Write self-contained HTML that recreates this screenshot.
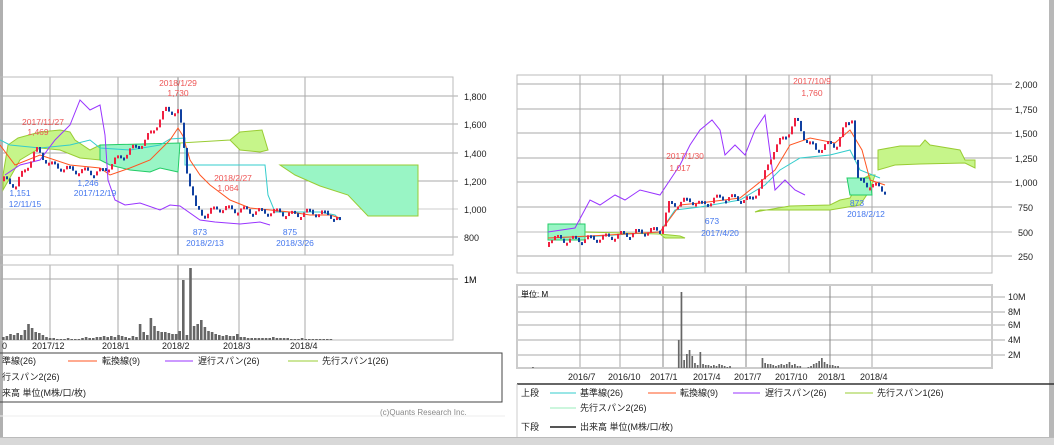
<!DOCTYPE html>
<html><head><meta charset="utf-8"><style>
body{margin:0;width:1054px;height:445px;overflow:hidden;background:#fff;font-family:"Liberation Sans","Noto Sans CJK JP",sans-serif;}
svg{position:absolute;left:0;top:0}
text{font-family:"Liberation Sans","Noto Sans CJK JP",sans-serif;}
</style></head><body>
<svg id="s" width="1054" height="445" viewBox="0 0 1054 445">
<rect x="0" y="0" width="3" height="437" fill="#b0b0b0"/>
<rect x="1049" y="0" width="5" height="437" fill="#b8b8b8"/>
<rect x="0" y="437" width="1054" height="8" fill="#d8d8d8"/>
<rect x="0" y="437" width="1054" height="1" fill="#bbb"/>

<!-- LEFT PRICE -->
<g stroke="#aaa" stroke-width="1">
<line x1="0" y1="96" x2="458" y2="96"/><line x1="0" y1="124" x2="458" y2="124"/><line x1="0" y1="153" x2="458" y2="153"/><line x1="0" y1="181" x2="458" y2="181"/><line x1="0" y1="209" x2="458" y2="209" stroke="#ccc"/><line x1="0" y1="237" x2="458" y2="237"/>
<line x1="50" y1="77" x2="50" y2="255"/><line x1="118" y1="77" x2="118" y2="255"/><line x1="178" y1="77" x2="178" y2="255" stroke="#888"/><line x1="239" y1="77" x2="239" y2="255"/><line x1="305" y1="77" x2="305" y2="255"/>
</g>
<rect x="0" y="77" width="453" height="178" fill="none" stroke="#bbb"/>
<polygon points="3,175 8,145 18,138 40,132 60,130 70,132 75,140 90,150 100,145 100,160 80,158 60,150 40,148 20,160 3,190" fill="#c6f58a" stroke="#9c3" stroke-width="1"/>
<polygon points="100,145 180,143 178,172 160,168 150,172 130,170 110,165 100,160" fill="#99f5c5" stroke="#2c6" stroke-width="1"/>
<polygon points="180,143 230,140 240,132 262,130 268,150 260,152 240,150 230,140" fill="#c6f58a" stroke="#9c3" stroke-width="1"/>
<polygon points="280,165 418,165 418,216 368,216 348,195 320,186 295,175 280,165" fill="#99f5c5" stroke="#9c3" stroke-width="1"/>
<polyline points="0,140 10,145 40,148 70,145 90,140 100,148 130,150 160,145 170,139 185,138 185,165 205,165 240,165 265,165 268,195 275,212 300,212 320,212 335,215 340,220" fill="none" stroke="#3cc" stroke-width="1"/>
<polyline points="0,145 15,165 40,155 70,165 100,168 110,175 130,168 150,160 170,140 178,128 183,136 190,160 200,175 210,185 230,200 250,208 270,210 290,212 310,215 330,215 340,218" fill="none" stroke="#f52" stroke-width="1"/>
<polyline points="5,175 20,165 40,160 55,140 70,125 80,100 90,110 100,105 105,135 108,180 115,200 125,205 140,203 160,210 170,205 180,206 200,220 215,222 240,224 260,222 270,225" fill="none" stroke="#93f" stroke-width="1"/>
<g id="lc"></g>
<g font-size="8.5" fill="#e55" text-anchor="middle">
<text x="178" y="86">2018/1/29</text><text x="178" y="96">1,730</text>
<text x="43" y="125">2017/11/27</text><text x="38" y="135">1,469</text>
<text x="233" y="181">2018/2/27</text><text x="228" y="191">1,064</text>
</g>
<g font-size="8.5" fill="#47e" text-anchor="middle">
<text x="20" y="196">1,151</text><text x="25" y="207">12/11/15</text>
<text x="88" y="186">1,246</text><text x="95" y="196">2017/12/19</text>
<text x="200" y="235">873</text><text x="205" y="246">2018/2/13</text>
<text x="290" y="235">875</text><text x="295" y="246">2018/3/26</text>
</g>
<g font-size="9" fill="#222">
<text x="464" y="100">1,800</text><text x="464" y="128">1,600</text><text x="464" y="157">1,400</text><text x="464" y="185">1,200</text><text x="464" y="213">1,000</text><text x="464" y="241">800</text>
</g>
<!-- LEFT VOLUME -->
<g stroke="#aaa"><line x1="0" y1="279" x2="458" y2="279"/><line x1="50" y1="265" x2="50" y2="340"/><line x1="118" y1="265" x2="118" y2="340"/><line x1="178" y1="265" x2="178" y2="340" stroke="#888"/><line x1="239" y1="265" x2="239" y2="340"/><line x1="305" y1="265" x2="305" y2="340"/></g>
<rect x="0" y="265" width="453" height="75" fill="none" stroke="#bbb"/>
<g id="lv" fill="#666"></g>
<text x="464" y="283" font-size="9">1M</text>
<g font-size="9" fill="#222"><text x="2" y="349">0</text><text x="32" y="349">2017/12</text><text x="102" y="349">2018/1</text><text x="162" y="349">2018/2</text><text x="223" y="349">2018/3</text><text x="290" y="349">2018/4</text></g>
<rect x="-2" y="353" width="504" height="49" fill="none" stroke="#444"/>
<g font-size="9" fill="#222">
<text x="2" y="364">準線(26)</text><line x1="68" y1="361" x2="97" y2="361" stroke="#f52"/><text x="102" y="364">転換線(9)</text>
<line x1="165" y1="361" x2="193" y2="361" stroke="#93f"/><text x="198" y="364">遅行スパン(26)</text>
<line x1="288" y1="361" x2="318" y2="361" stroke="#9c3"/><text x="322" y="364">先行スパン1(26)</text>
<text x="2" y="380">行スパン2(26)</text><text x="2" y="396">来高 単位(M株/口/枚)</text>
</g>
<line x1="0" y1="416" x2="505" y2="416" stroke="#eee"/>
<text x="380" y="415" font-size="8" fill="#888">(c)Quants Research Inc.</text>

<!-- RIGHT PRICE -->
<g stroke="#aaa">
<line x1="517" y1="84" x2="1012" y2="84"/><line x1="517" y1="109" x2="1012" y2="109"/><line x1="517" y1="133" x2="1012" y2="133"/><line x1="517" y1="158" x2="1012" y2="158"/><line x1="517" y1="182" x2="1012" y2="182"/><line x1="517" y1="207" x2="1012" y2="207"/><line x1="517" y1="232" x2="1012" y2="232" stroke="#ddd" stroke-width="2"/><line x1="517" y1="256" x2="1012" y2="256"/>
<line x1="580" y1="75" x2="580" y2="273"/><line x1="620" y1="75" x2="620" y2="273"/><line x1="663" y1="75" x2="663" y2="273" stroke="#888"/><line x1="705" y1="75" x2="705" y2="273"/><line x1="746" y1="75" x2="746" y2="273" stroke="#888"/><line x1="789" y1="75" x2="789" y2="273"/><line x1="830" y1="75" x2="830" y2="273" stroke="#888"/><line x1="872" y1="75" x2="872" y2="273"/>
</g>
<rect x="517" y="75" width="475" height="198" fill="none" stroke="#bbb"/>
<polygon points="548,224 585,224 585,240 548,240" fill="#99f5c5" stroke="#2c6"/>
<polygon points="585,232 660,234 665,238 685,238 680,236 660,234" fill="#c6f58a" stroke="#9c3"/>
<polygon points="755,212 790,206 830,205 840,200 850,198 860,180 870,175 875,175 870,190 860,205 830,210 760,210" fill="#c6f58a" stroke="#9c3"/>
<polygon points="878,150 900,146 920,146 925,140 930,145 960,150 965,160 975,160 975,168 965,163 920,164 895,165 878,170" fill="#c6f58a" stroke="#9c3"/>
<polygon points="847,178 870,178 872,195 850,195" fill="#99f5c5" stroke="#2c6"/>
<polyline points="548,238 600,236 660,232 675,210 700,207 740,200 765,185 780,170 800,158 830,155 850,150 860,170 880,178" fill="none" stroke="#3cc"/>
<polyline points="548,238 590,236 660,232 680,205 700,203 740,198 765,178 775,170 790,145 810,138 835,143 850,130 862,150 870,180 885,185" fill="none" stroke="#f52"/>
<polyline points="548,232 575,228 590,200 600,205 615,195 625,200 640,190 660,195 670,180 680,165 690,145 700,130 712,120 720,130 725,155 735,145 745,155 755,130 765,115 775,190 785,180 795,190 805,195" fill="none" stroke="#93f"/>
<g id="rc"></g>
<g font-size="8.5" fill="#e55" text-anchor="middle">
<text x="812" y="84">2017/10/9</text><text x="812" y="96">1,760</text>
<text x="685" y="159">2017/1/30</text><text x="680" y="171">1,017</text>
</g>
<g font-size="8.5" fill="#47e" text-anchor="middle">
<text x="712" y="224">673</text><text x="720" y="236">2017/4/20</text>
<text x="857" y="206">873</text><text x="866" y="217">2018/2/12</text>
</g>
<g font-size="9" fill="#222">
<text x="1015" y="88">2,000</text><text x="1015" y="113">1,750</text><text x="1015" y="137">1,500</text><text x="1015" y="162">1,250</text><text x="1015" y="186">1,000</text><text x="1018" y="211">750</text><text x="1018" y="236">500</text><text x="1018" y="260">250</text>
</g>
<!-- RIGHT VOLUME -->
<g stroke="#aaa">
<line x1="517" y1="297" x2="1005" y2="297"/><line x1="517" y1="312" x2="1005" y2="312"/><line x1="517" y1="325" x2="1005" y2="325"/><line x1="517" y1="340" x2="1005" y2="340"/><line x1="517" y1="355" x2="1005" y2="355"/>
<line x1="580" y1="285" x2="580" y2="368"/><line x1="620" y1="285" x2="620" y2="368"/><line x1="663" y1="285" x2="663" y2="368" stroke="#888"/><line x1="746" y1="285" x2="746" y2="368" stroke="#888"/><line x1="830" y1="285" x2="830" y2="368" stroke="#888"/><line x1="872" y1="285" x2="872" y2="368"/>
</g>
<rect x="517" y="285" width="475" height="83" fill="none" stroke="#ccc" stroke-width="2"/>
<text x="521" y="297" font-size="8">単位: M</text>
<g id="rv" fill="#666"></g>
<g font-size="9" fill="#222"><text x="1008" y="300">10M</text><text x="1008" y="315">8M</text><text x="1008" y="328">6M</text><text x="1008" y="343">4M</text><text x="1008" y="358">2M</text></g>
<g font-size="9" fill="#222"><text x="568" y="380">2016/7</text><text x="608" y="380">2016/10</text><text x="650" y="380">2017/1</text><text x="693" y="380">2017/4</text><text x="734" y="380">2017/7</text><text x="775" y="380">2017/10</text><text x="818" y="380">2018/1</text><text x="860" y="380">2018/4</text></g>
<line x1="517" y1="384" x2="1054" y2="384" stroke="#333" stroke-width="1.5"/>
<line x1="517" y1="384" x2="517" y2="437" stroke="#ccc"/>
<g font-size="9" fill="#222">
<text x="521" y="396">上段</text><line x1="550" y1="393" x2="576" y2="393" stroke="#3cc"/><text x="580" y="396">基準線(26)</text>
<line x1="648" y1="393" x2="676" y2="393" stroke="#f52"/><text x="680" y="396">転換線(9)</text>
<line x1="733" y1="393" x2="760" y2="393" stroke="#93f"/><text x="765" y="396">遅行スパン(26)</text>
<line x1="845" y1="393" x2="873" y2="393" stroke="#9c3"/><text x="877" y="396">先行スパン1(26)</text>
<line x1="550" y1="408" x2="576" y2="408" stroke="#9eb"/><text x="580" y="411">先行スパン2(26)</text>
<text x="521" y="430">下段</text><line x1="550" y1="427" x2="576" y2="427" stroke="#555" stroke-width="2"/><text x="580" y="430">出来高 単位(M株/口/枚)</text>
</g>
</svg>
<script>
var NS="http://www.w3.org/2000/svg";
function el(p,t,a){var e=document.createElementNS(NS,t);for(var k in a)e.setAttribute(k,a[k]);p.appendChild(e);}
function candles(id,pts,x0,x1,step){var g=document.getElementById(id);var prev=null;
 for(var x=x0;x<=x1;x+=step){var y=interp(pts,x)+Math.sin(x*1.7)*4;var up=prev===null||y<prev;
  var top=Math.min(y,prev===null?y+5:prev),h=Math.max(3,Math.abs(y-(prev===null?y+5:prev)));
  el(g,"rect",{x:x,y:top,width:Math.max(2,step-1),height:h,fill:up?"#f02040":"#1040a0"});prev=y;}}
function interp(p,x){for(var i=0;i<p.length-1;i++){if(x>=p[i][0]&&x<=p[i+1][0]){var t=(x-p[i][0])/(p[i+1][0]-p[i][0]);return p[i][1]+t*(p[i+1][1]-p[i][1]);}}return p[p.length-1][1];}
candles("lc",[[3,180],[15,185],[35,150],[50,165],[70,170],[90,172],[100,172],[115,160],[130,150],[145,140],[155,125],[165,110],[178,112],[186,170],[195,210],[205,215],[215,208],[240,210],[260,212],[280,212],[290,215],[310,212],[330,215],[340,222]],3,340,3);
candles("rc",[[548,238],[570,240],[600,238],[640,232],[660,230],[668,205],[690,200],[700,205],[720,197],[750,200],[762,180],[772,150],[785,135],[795,120],[805,140],[815,150],[825,145],[835,145],[845,125],[852,115],[855,180],[870,185],[885,190]],548,885,3);
function vols(id,x0,base,arr,step){var g=document.getElementById(id);arr.forEach(function(h,i){if(h>0)el(g,"rect",{x:x0+i*step,y:base-h,width:step-1,height:h});});}
vols("lv",2,340,[3,4,6,5,7,5,10,16,12,8,7,5,3,2,2,1,1,1,2,1,1,1,2,3,2,2,3,3,4,3,4,3,5,4,3,2,4,3,16,8,5,22,14,9,8,8,7,6,6,9,60,5,72,14,16,20,13,9,8,6,5,4,5,4,4,6,3,3,2,2,2,2,2,2,2,3,2,2,2,2,1,1,1,2,1,1,1,1,1,1,1,1],3.6);
vols("rv",524,368,[0,0,0,1,0,0,0,0,0,0,0,0,0,0,0,0,0,0,0,0,0,0,0,0,0,0,0,0,0,0,0,0,0,0,0,0,0,0,0,0,0,0,0,0,0,0,0,0,0,0,0,0,0,0,0,0,0,28,76,8,14,18,12,5,3,16,4,3,3,2,3,2,4,3,2,1,2,0,0,0,0,0,0,0,0,0,0,0,10,5,4,4,3,2,3,4,3,4,6,3,4,2,2,0,0,1,2,4,5,7,10,6,4,3,3,2,2],2.7);
</script>
</body></html>
